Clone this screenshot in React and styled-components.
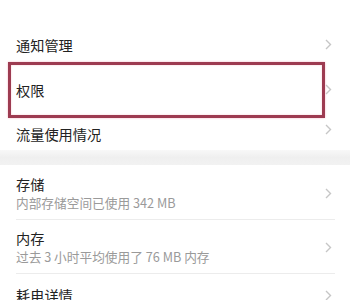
import styled, { createGlobalStyle } from "styled-components";

const GlobalStyle = createGlobalStyle`
  html, body {
    margin: 0;
    padding: 0;
    background: #ffffff;
  }
  body {
    font-family: "Noto Sans CJK SC", "Noto Sans", sans-serif;
    color: #222222;
  }
`;

const Page = styled.div`
  width: 350px;
  height: 300px;
  overflow: hidden;
`;

const Section = styled.div`
  display: flex;
  flex-direction: column;
  padding-top: ${(p) => p.$top || 0}px;
`;

const Row = styled.div`
  position: relative;
  display: flex;
  align-items: ${(p) => (p.$short ? "flex-start" : "center")};
  height: ${(p) => (p.$short ? 38 : 45)}px;
  padding: ${(p) => (p.$short ? "12px" : "0")} 18px 0 16px;
  box-sizing: border-box;
`;

const Label = styled.span`
  flex: 1;
  font-size: 14.2px;
  line-height: 20px;
  color: #222222;
`;

const Band = styled.div`
  height: 15px;
  background: linear-gradient(to bottom, #f8f8f8, #efefef 50%, #f2f2f2);
`;

const Item = styled.div`
  display: flex;
  align-items: center;
  padding: ${(p) => p.$pt}px 18px ${(p) => p.$pb}px 16px;
`;

const Texts = styled.div`
  flex: 1;
  display: flex;
  flex-direction: column;
`;

const Sub = styled.span`
  font-size: 12.7px;
  line-height: 18px;
  color: #9a9a9a;
`;

const Divider = styled.div`
  height: 1px;
  margin: 0 15px 0 16px;
  background: #ececec;
`;

const Highlight = styled.div`
  position: absolute;
  left: 8px;
  right: 25px;
  top: -5px;
  bottom: -6px;
  border: 3px solid #9d3b51;
  box-shadow: 0 0 2px #f4b9c6, inset 0 0 2px #f7c4cf;
  pointer-events: none;
`;

const Chevron = () => (
  <svg width="7" height="11" viewBox="0 0 7 11">
    <path d="M1 1 L5.5 5.5 L1 10" fill="none" stroke="#c6c6c6" strokeWidth="1.4" />
  </svg>
);

const App = () => {
  return (
    <Page>
      <GlobalStyle />
      <Section $top={22}>
        <Row>
          <Label>通知管理</Label>
          <Chevron />
        </Row>
        <Row>
          <Label>权限</Label>
          <Chevron />
          <Highlight />
        </Row>
        <Row $short>
          <Label>流量使用情况</Label>
          <Chevron />
        </Row>
      </Section>
      <Band />
      <Section>
        <Item $pt={9} $pb={7}>
          <Texts>
            <Label>存储</Label>
            <Sub>内部存储空间已使用 342 MB</Sub>
          </Texts>
          <Chevron />
        </Item>
        <Divider />
        <Item $pt={8} $pb={7}>
          <Texts>
            <Label>内存</Label>
            <Sub>过去 3 小时平均使用了 76 MB 内存</Sub>
          </Texts>
          <Chevron />
        </Item>
        <Divider />
        <Item $pt={11} $pb={10}>
          <Texts>
            <Label>耗电详情</Label>
          </Texts>
          <Chevron />
        </Item>
      </Section>
    </Page>
  );
};

export default App;
